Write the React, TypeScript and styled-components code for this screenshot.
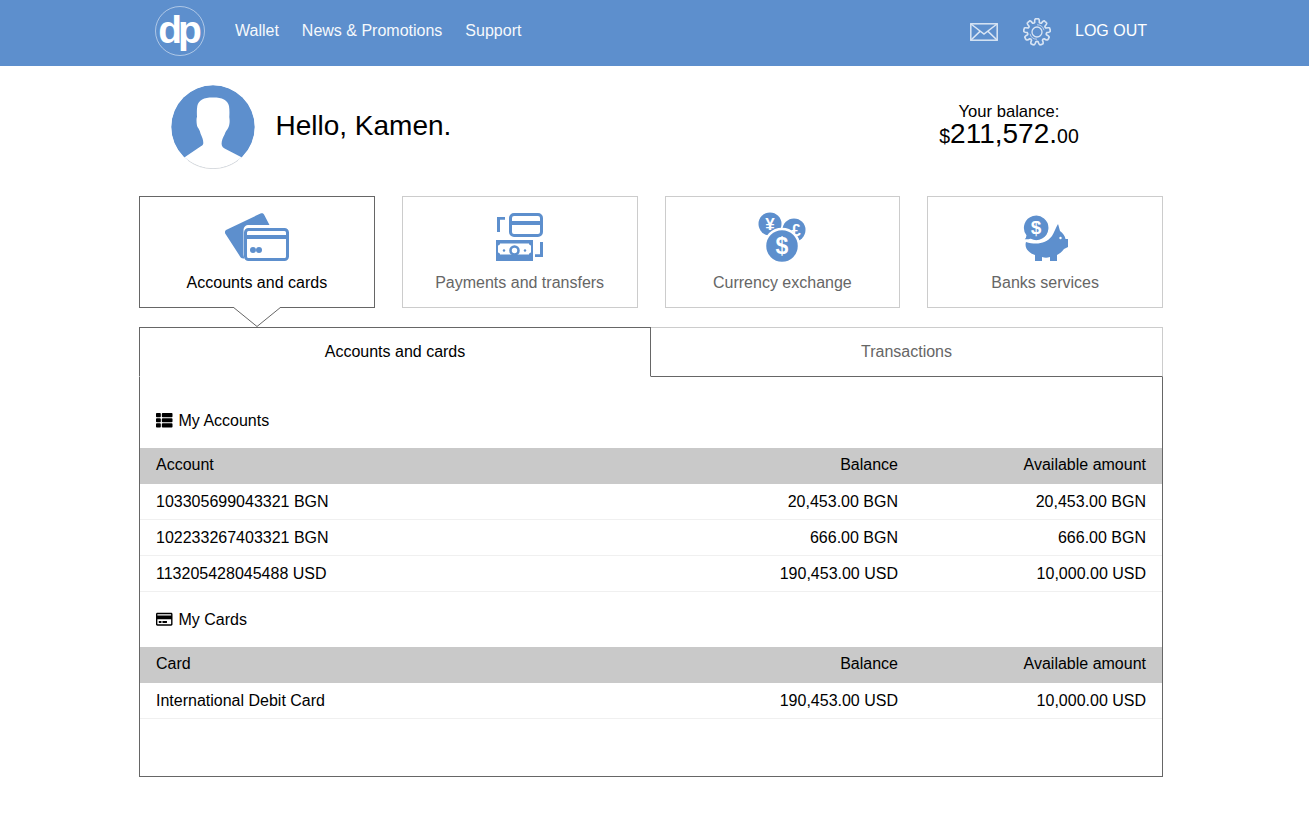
import React from "react";
import styled, { createGlobalStyle } from "styled-components";
import { FaRegCreditCard, FaThList } from "react-icons/fa";

const BLUE = "#5d8fcd";
const DARK_LINE = "#666666";
const LIGHT_LINE = "#cccccc";

const GlobalStyle = createGlobalStyle`
  html, body {
    margin: 0;
    padding: 0;
    background: #ffffff;
    color: #000000;
    font-family: "Liberation Sans", Arial, sans-serif;
    font-size: 16px;
  }
`;

const Header = styled.header`
  height: 66px;
  background: ${BLUE};
`;

const HeaderInner = styled.div`
  width: 1024px;
  height: 62px;
  margin-left: 139px;
  padding: 0 16px;
  box-sizing: border-box;
  display: flex;
  align-items: center;
`;

const Logo = styled.div`
  width: 50px;
  height: 50px;
  box-sizing: border-box;
  border: 1px solid rgba(255, 255, 255, 0.5);
  border-radius: 50%;
  color: #ffffff;
  font-size: 39px;
  font-weight: 700;
  line-height: 46px;
  letter-spacing: -4px;
  text-align: center;
  padding-right: 4px;
`;

const Nav = styled.nav`
  display: flex;
  gap: 23px;
  margin-left: 30px;
`;

const NavLink = styled.a`
  color: #ffffff;
  opacity: 0.95;
  font-size: 16px;
  line-height: 20px;
`;

const HeaderRight = styled.div`
  margin-left: auto;
  display: flex;
  align-items: center;
`;

const MailIcon = styled.svg`
  width: 28px;
  height: 18px;
  margin-top: 2px;
`;

const GearIcon = styled.svg`
  width: 28px;
  height: 28px;
  margin-left: 25px;
  margin-top: 2px;
`;

const LogOut = styled.a`
  margin-left: 24px;
  color: #ffffff;
  font-size: 16px;
  line-height: 20px;
`;

const Page = styled.main`
  width: 1024px;
  margin: 0 0 50px 139px;
`;

const Greeting = styled.section`
  height: 130px;
  box-sizing: border-box;
  padding: 0 0 8px 32px;
  display: flex;
  align-items: center;
`;

const Avatar = styled.svg`
  width: 84px;
  height: 84px;
  flex: none;
`;

const Hello = styled.h1`
  margin: 0 0 2px 20.500px;
  font-size: 28px;
  font-weight: 400;
  line-height: 32px;
`;

const Balance = styled.div`
  margin-left: auto;
  width: 140px;
  margin-right: 84px;
  text-align: center;
  margin-bottom: 2px;
`;

const BalanceLabel = styled.div`
  font-size: 16.600px;
  line-height: 18px;
`;

const BalanceAmount = styled.div`
  font-size: 19.500px;
  line-height: 25px;
  white-space: nowrap;

  strong {
    font-size: 28px;
    font-weight: 400;
  }
`;

const Tiles = styled.div`
  display: grid;
  grid-template-columns: repeat(4, 1fr);
  gap: 27px;
`;

const Tile = styled.div<{ $active?: boolean }>`
  position: relative;
  height: 112px;
  box-sizing: border-box;
  border: 1px solid ${(p) => (p.$active ? DARK_LINE : LIGHT_LINE)};
  color: ${(p) => (p.$active ? "#000000" : DARK_LINE)};
  display: flex;
  flex-direction: column;
  align-items: center;
  padding-top: 15px;
`;

const TileIcon = styled.svg`
  height: 50px;
  display: block;
`;

const TileLabel = styled.div`
  margin-top: 11px;
  line-height: 20px;
`;

const Caret = styled.svg`
  position: absolute;
  left: 93px;
  top: 110px;
  width: 48px;
  height: 20px;
`;

const TabRow = styled.div`
  margin-top: 19px;
  display: grid;
  grid-template-columns: 1fr 1fr;
`;

const Tab = styled.div<{ $active?: boolean }>`
  height: 50px;
  box-sizing: border-box;
  display: flex;
  align-items: center;
  justify-content: center;
  border-top: 1px solid ${(p) => (p.$active ? DARK_LINE : LIGHT_LINE)};
  border-right: 1px solid ${(p) => (p.$active ? DARK_LINE : LIGHT_LINE)};
  border-left: ${(p) => (p.$active ? `1px solid ${DARK_LINE}` : "none")};
  border-bottom: 1px solid ${(p) => (p.$active ? "#ffffff" : DARK_LINE)};
  color: ${(p) => (p.$active ? "#000000" : DARK_LINE)};
`;

const Panel = styled.section`
  height: 400px;
  box-sizing: border-box;
  border: 1px solid ${DARK_LINE};
  border-top: none;
`;

const SectionTitle = styled.h2<{ $height: number; $offset: number }>`
  margin: 0;
  height: ${(p) => p.$height}px;
  box-sizing: border-box;
  padding: ${(p) => p.$offset}px 16px 0;
  display: flex;
  align-items: center;
  gap: 6px;
  font-size: 16px;
  font-weight: 400;

  svg {
    width: 16.500px;
    height: 16.500px;
  }
`;

const Row = styled.div`
  height: 36px;
  box-sizing: border-box;
  padding: 0 16px;
  display: grid;
  grid-template-columns: 1fr 248px 248px;
  align-items: center;
  border-bottom: 1px solid #f0f0f0;
`;

const HeadRow = styled(Row)`
  background: #c9c9c9;
  border-bottom: none;
  padding-bottom: 2px;
`;

const Amount = styled.div`
  text-align: right;
`;

const accounts = [
  ["103305699043321 BGN", "20,453.00 BGN", "20,453.00 BGN"],
  ["102233267403321 BGN", "666.00 BGN", "666.00 BGN"],
  ["113205428045488 USD", "190,453.00 USD", "10,000.00 USD"],
];

const cards = [["International Debit Card", "190,453.00 USD", "10,000.00 USD"]];

// outline of a cog wheel, teeth drawn as flat topped bumps
function gearPath(cx: number, cy: number, outer: number, inner: number, teeth: number) {
  const pts: string[] = [];
  const step = (Math.PI * 2) / teeth;
  for (let i = 0; i < teeth; i++) {
    const a = i * step - Math.PI / 2;
    const at = (r: number, t: number) =>
      `${(cx + r * Math.cos(t)).toFixed(2)} ${(cy + r * Math.sin(t)).toFixed(2)}`;
    pts.push(`${i === 0 ? "M" : "L"}${at(inner, a - step * 0.34)}`);
    pts.push(`Q${at(outer + 0.8, a - step * 0.26)} ${at(outer, a - step * 0.08)}`);
    pts.push(`Q${at(outer + 0.4, a)} ${at(outer, a + step * 0.08)}`);
    pts.push(`Q${at(outer + 0.8, a + step * 0.26)} ${at(inner, a + step * 0.34)}`);
    pts.push(`Q${at(inner - 0.8, a + step * 0.5)} ${at(inner, a + step * 0.66)}`);
  }
  return pts.join(" ") + "Z";
}

function Table({ head, rows }: { head: string; rows: string[][] }) {
  return (
    <div>
      <HeadRow>
        <div>{head}</div>
        <Amount>Balance</Amount>
        <Amount>Available amount</Amount>
      </HeadRow>
      {rows.map((r) => (
        <Row key={r[0]}>
          <div>{r[0]}</div>
          <Amount>{r[1]}</Amount>
          <Amount>{r[2]}</Amount>
        </Row>
      ))}
    </div>
  );
}

export default function App() {
  return (
    <>
      <GlobalStyle />
      <Header>
        <HeaderInner>
          <Logo>dp</Logo>
          <Nav>
            <NavLink>Wallet</NavLink>
            <NavLink>News &amp; Promotions</NavLink>
            <NavLink>Support</NavLink>
          </Nav>
          <HeaderRight>
            <MailIcon viewBox="0 0 28 18" fill="none" stroke="#d9e5f4" strokeWidth="1.5">
              <rect x="0.8" y="0.8" width="26.4" height="16.4" />
              <path d="M1 1l13 10L27 1M1 17l9-8.600M27 17l-9-8.600" />
            </MailIcon>
            <GearIcon viewBox="0 0 28 28" fill="none" stroke="#d9e5f4">
              <path d={gearPath(14, 14, 13.2, 9.8, 9)} strokeWidth="1.6" />
              <circle cx="14" cy="14" r="5" strokeWidth="1.3" />
              <path d="M14 6.800a7.200 7.200 0 0 1 7 5.400M14 21.200a7.200 7.200 0 0 1-7-5.400" strokeWidth="0.8" />
            </GearIcon>
            <LogOut>LOG OUT</LogOut>
          </HeaderRight>
        </HeaderInner>
      </Header>
      <Page>
        <Greeting>
          <Avatar viewBox="0 0 84 84">
            <defs>
              <clipPath id="avatarClip">
                <circle cx="42" cy="42" r="41.7" />
              </clipPath>
            </defs>
            <circle cx="42" cy="42" r="41.7" fill="#ffffff" />
            <g clipPath="url(#avatarClip)">
              <circle cx="42" cy="42" r="42" fill={BLUE} />
              <path
                fill="#ffffff"
                d="M41.500 12.500C33 12.500 27.500 15 26.300 21c-.7 4-.4 8-.3 11-.8 1.500-.6 7 .5 10 1.200 2 2.300 3 3 6.500 1.500 3.500 2.800 6 2.800 9.500 0 1.500-.8 2.500-2.800 3.500L14 72v14h56V72l-15-7.700c-2.600-1.300-4.300-2.500-4.400-5.300-.1-3 1.300-6.500 3-9.500 1-3.500 2.800-4.500 4-7.500 1.300-3 1.200-7 .7-10 .2-3 .3-7-.3-11-1.200-6-7-8.500-15.500-8.500Z"
              />
            </g>
            <circle cx="42" cy="42" r="41.700" fill="none" stroke="#d4d4d4" strokeWidth="0.7" pathLength="360" strokeDasharray="74 286" strokeDashoffset="-53" />
          </Avatar>
          <Hello>Hello, Kamen.</Hello>
          <Balance>
            <BalanceLabel>Your balance:</BalanceLabel>
            <BalanceAmount>
              <span>$</span>
              <strong>211,572.</strong>
              <span>00</span>
            </BalanceAmount>
          </Balance>
        </Greeting>

        <Tiles>
          <Tile $active>
            <TileIcon viewBox="0 0 64 50" width="64" fill={BLUE}>
              <path d="M1 18 35.500 1.500c1.500-.6 2.800-.2 3.500 1L44.500 13H24c-3.500 0-5.500 2-5.500 5.500V42c0 1.500.3 3 .9 4.200-1.700.6-3.400 0-4.200-1.500L.2 21.500c-.6-1.300-.3-2.700.8-3.500Z" />
              <rect x="20.500" y="17.500" width="42" height="30" rx="3" fill="none" stroke={BLUE} strokeWidth="3" />
              <rect x="20" y="23" width="43" height="4" />
              <circle cx="28" cy="38" r="3" />
              <circle cx="34" cy="38" r="3" />
            </TileIcon>
            <TileLabel>Accounts and cards</TileLabel>
            <Caret viewBox="0 0 48 20">
              <path d="M0 0 24 19.500 48 0" fill="#ffffff" stroke={DARK_LINE} strokeWidth="1" />
            </Caret>
          </Tile>

          <Tile>
            <TileIcon viewBox="0 0 48 50" width="48" fill={BLUE}>
              <rect x="14.500" y="2.500" width="31" height="21" rx="3.500" fill="none" stroke={BLUE} strokeWidth="3" />
              <rect x="14" y="9" width="32" height="4" />
              <path d="M1 5h8v2.800H4V20H1ZM47 30v15h-8v-2.800h5V30Z" />
              <path
                fillRule="evenodd"
                d="M0 28h37v21H0Zm4 3.500c0 1.300-1 2-2 2v7c1 0 2 .8 2 2h29c0-1.200 1-2 2-2v-7c-1 0-2-.7-2-2Z"
              />
              <circle cx="18.500" cy="38.500" r="4" fill="none" stroke={BLUE} strokeWidth="2.600" />
              <circle cx="8" cy="38.500" r="1.200" />
              <circle cx="29" cy="38.500" r="1.200" />
            </TileIcon>
            <TileLabel>Payments and transfers</TileLabel>
          </Tile>

          <Tile>
            <TileIcon viewBox="0 0 48 50" width="48" fill={BLUE} fontFamily="Liberation Sans" fontWeight="700" textAnchor="middle">
              <circle cx="12" cy="12" r="11.500" />
              <text x="12" y="18" fontSize="17" fill="#ffffff">¥</text>
              <circle cx="36" cy="18" r="11.500" />
              <text x="38" y="24" fontSize="17" fill="#ffffff">£</text>
              <circle cx="24" cy="34" r="17" stroke="#ffffff" strokeWidth="2.500" />
              <text x="24" y="42" fontSize="23" fill="#ffffff">$</text>
            </TileIcon>
            <TileLabel>Currency exchange</TileLabel>
          </Tile>

          <Tile>
            <TileIcon viewBox="0 0 46 50" width="46" fill={BLUE} fontFamily="Liberation Sans" fontWeight="700" textAnchor="middle">
              <path d="M4 30C14 33 24 32 30 24c2-3 4-9 6-12 1 3 1.500 5 2 7 3 2 5 5 5.500 8H46v8l-4 2c-2 3-5 5-7 6v6h-7v-4c-3 1-5 1-8 0v4h-7v-6C7 41 2 36 4 30Z" />
              <circle cx="38.500" cy="26" r="1.200" fill="#ffffff" />
              <path stroke="#ffffff" strokeWidth="1.500" d="M1.500 27.500c1.300-1 2.200-2.500 2.200-4A13 13 0 1 1 8.500 27.500c-2 .7-4.500 .8-7 0Z" />
              <text x="14" y="21.500" fontSize="19" fill="#ffffff">$</text>
            </TileIcon>
            <TileLabel>Banks services</TileLabel>
          </Tile>
        </Tiles>

        <TabRow>
          <Tab $active>Accounts and cards</Tab>
          <Tab>Transactions</Tab>
        </TabRow>

        <Panel>
          <SectionTitle $height={71} $offset={16}>
            <FaThList />
            My Accounts
          </SectionTitle>
          <Table head="Account" rows={accounts} />
          <SectionTitle $height={55} $offset={0}>
            <FaRegCreditCard />
            My Cards
          </SectionTitle>
          <Table head="Card" rows={cards} />
        </Panel>
      </Page>
    </>
  );
}
